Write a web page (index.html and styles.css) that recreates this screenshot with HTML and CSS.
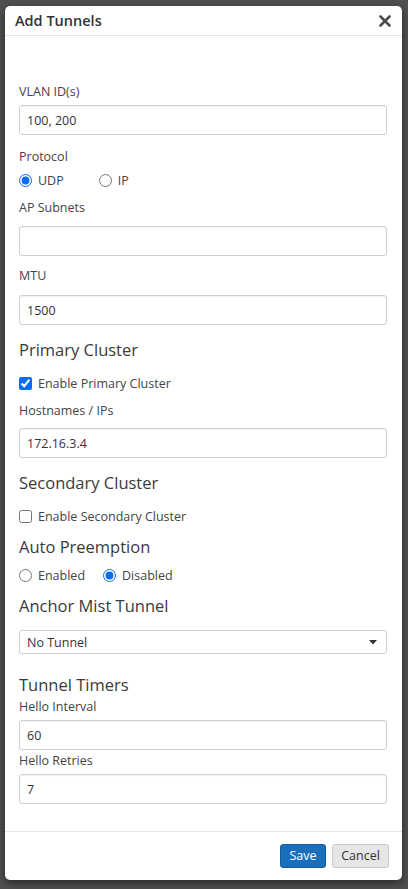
FILE: index.html
```html
<!DOCTYPE html>
<html lang="en">
<head>
<meta charset="utf-8">
<title>Add Tunnels</title>
<link rel="stylesheet" href="styles.css">
</head>
<body>
<div class="backdrop">
  <div class="modal">
    <div class="modal-header">
      <h1 class="modal-title">Add Tunnels</h1>
      <button class="close" type="button" aria-label="Close">
        <svg width="12" height="12" viewBox="0 0 12 12"><path d="M1.5 1.5 L10.5 10.5 M10.5 1.5 L1.5 10.5" stroke="#4a4a4a" stroke-width="2.6" stroke-linecap="round" fill="none"/></svg>
      </button>
    </div>
    <div class="modal-body">
      <label class="field-label">VLAN ID(s)</label>
      <input class="text-input mt-4" type="text" value="100, 200">

      <label class="field-label mt-13">Protocol</label>
      <div class="choice-row wide mt-5">
        <label class="choice"><input type="radio" name="proto" checked><span>UDP</span></label>
        <label class="choice"><input type="radio" name="proto"><span>IP</span></label>
      </div>

      <label class="field-label mt-10">AP Subnets</label>
      <input class="text-input mt-9" type="text" value="">

      <label class="field-label mt-11">MTU</label>
      <input class="text-input mt-10" type="text" value="1500">

      <h2 class="section-title mt-13">Primary Cluster</h2>
      <label class="choice mt-12"><input type="checkbox" checked><span>Enable Primary Cluster</span></label>

      <label class="field-label mt-10">Hostnames / IPs</label>
      <input class="text-input mt-8" type="text" value="172.16.3.4">

      <h2 class="section-title mt-13">Secondary Cluster</h2>
      <label class="choice mt-12"><input type="checkbox"><span>Enable Secondary Cluster</span></label>

      <h2 class="section-title mt-10">Auto Preemption</h2>
      <div class="choice-row mt-7">
        <label class="choice"><input type="radio" name="pre"><span>Enabled</span></label>
        <label class="choice"><input type="radio" name="pre" checked><span>Disabled</span></label>
      </div>

      <h2 class="section-title mt-10">Anchor Mist Tunnel</h2>
      <div class="select mt-12">
        <span>No Tunnel</span>
        <svg class="caret" width="8" height="5" viewBox="0 0 8 5"><path d="M0 0 H8 L4 4.5 Z" fill="#333"/></svg>
      </div>

      <h2 class="section-title mt-19">Tunnel Timers</h2>
      <label class="field-label mt-1">Hello Interval</label>
      <input class="text-input mt-4" type="text" value="60">

      <label class="field-label mt-2">Hello Retries</label>
      <input class="text-input mt-4" type="text" value="7">
    </div>
    <div class="modal-footer">
      <button class="btn btn-primary" type="button">Save</button>
      <button class="btn btn-default" type="button">Cancel</button>
    </div>
  </div>
</div>
</body>
</html>
```

FILE: styles.css
```css
* { box-sizing: border-box; }

html, body {
  margin: 0;
  padding: 0;
  height: 100%;
}

body {
  font-family: "Open Sans", "Liberation Sans", sans-serif;
  color: #333;
  background: #505050;
}

.backdrop {
  padding: 6px 6px 9px 5px;
}

.modal {
  width: 397px;
  background: #fff;
  border-radius: 5px;
  box-shadow: 0 3px 9px rgba(0, 0, 0, 0.5);
  display: flex;
  flex-direction: column;
}

.modal-header {
  height: 30px;
  border-bottom: 1px solid #e5e5e5;
  display: flex;
  align-items: center;
  justify-content: space-between;
  padding: 0 11px 0 10px;
}

.modal-title {
  margin: 0;
  font-size: 14.5px;
  font-weight: 600;
  line-height: 20px;
  color: #333;
}

.close {
  border: 0;
  background: none;
  padding: 0;
  width: 13px;
  height: 13px;
  display: flex;
  align-items: center;
  justify-content: center;
  cursor: pointer;
}

.modal-body {
  display: flex;
  flex-direction: column;
  align-items: stretch;
  padding: 47px 15px 27px 14px;
}

.field-label {
  display: block;
  font-size: 12.5px;
  line-height: 18px;
  color: #444;
}

.section-title {
  margin: 0;
  font-size: 16.5px;
  font-weight: 400;
  line-height: 24px;
  color: #3a3a3a;
}

.text-input {
  display: block;
  width: 100%;
  height: 30px;
  border: 1px solid #cfcfcf;
  border-radius: 3px;
  box-shadow: inset 0 1px 1px rgba(0, 0, 0, 0.06);
  padding: 0 7px;
  font-family: inherit;
  font-size: 12.5px;
  color: #333;
  background: #fff;
}

.select {
  height: 24px;
  border: 1px solid #cfcfcf;
  border-radius: 3px;
  padding: 0 9px 0 7px;
  display: flex;
  align-items: center;
  justify-content: space-between;
  font-size: 12.5px;
  color: #333;
}

.choice-row {
  display: flex;
  align-items: center;
  gap: 18px;
  height: 18px;
}

.choice-row.wide {
  gap: 35px;
}

.choice {
  display: flex;
  align-items: center;
  gap: 6px;
  height: 18px;
  font-size: 12.5px;
  color: #444;
}

.choice input {
  margin: 0;
  width: 13px;
  height: 13px;
  accent-color: #0a6cf0;
}

.modal-footer {
  border-top: 1px solid #e5e5e5;
  display: flex;
  justify-content: flex-end;
  gap: 6px;
  padding: 12px 13px 12px 0;
}

.btn {
  height: 24px;
  border-radius: 3px;
  font-family: inherit;
  font-size: 12.5px;
  line-height: 22px;
  padding: 0;
  cursor: pointer;
}

.btn-primary {
  width: 46px;
  background: #1a6fbd;
  border: 1px solid #155f9f;
  color: #fff;
}

.btn-default {
  width: 57px;
  background: #e6e6e6;
  border: 1px solid #c8c8c8;
  color: #333;
}

.mt-1 { margin-top: 1px; }
.mt-2 { margin-top: 2px; }
.mt-4 { margin-top: 4px; }
.mt-5 { margin-top: 5px; }
.mt-7 { margin-top: 7px; }
.mt-8 { margin-top: 8px; }
.mt-9 { margin-top: 9px; }
.mt-10 { margin-top: 10px; }
.mt-11 { margin-top: 11px; }
.mt-12 { margin-top: 12px; }
.mt-13 { margin-top: 13px; }
.mt-19 { margin-top: 19px; }
```
